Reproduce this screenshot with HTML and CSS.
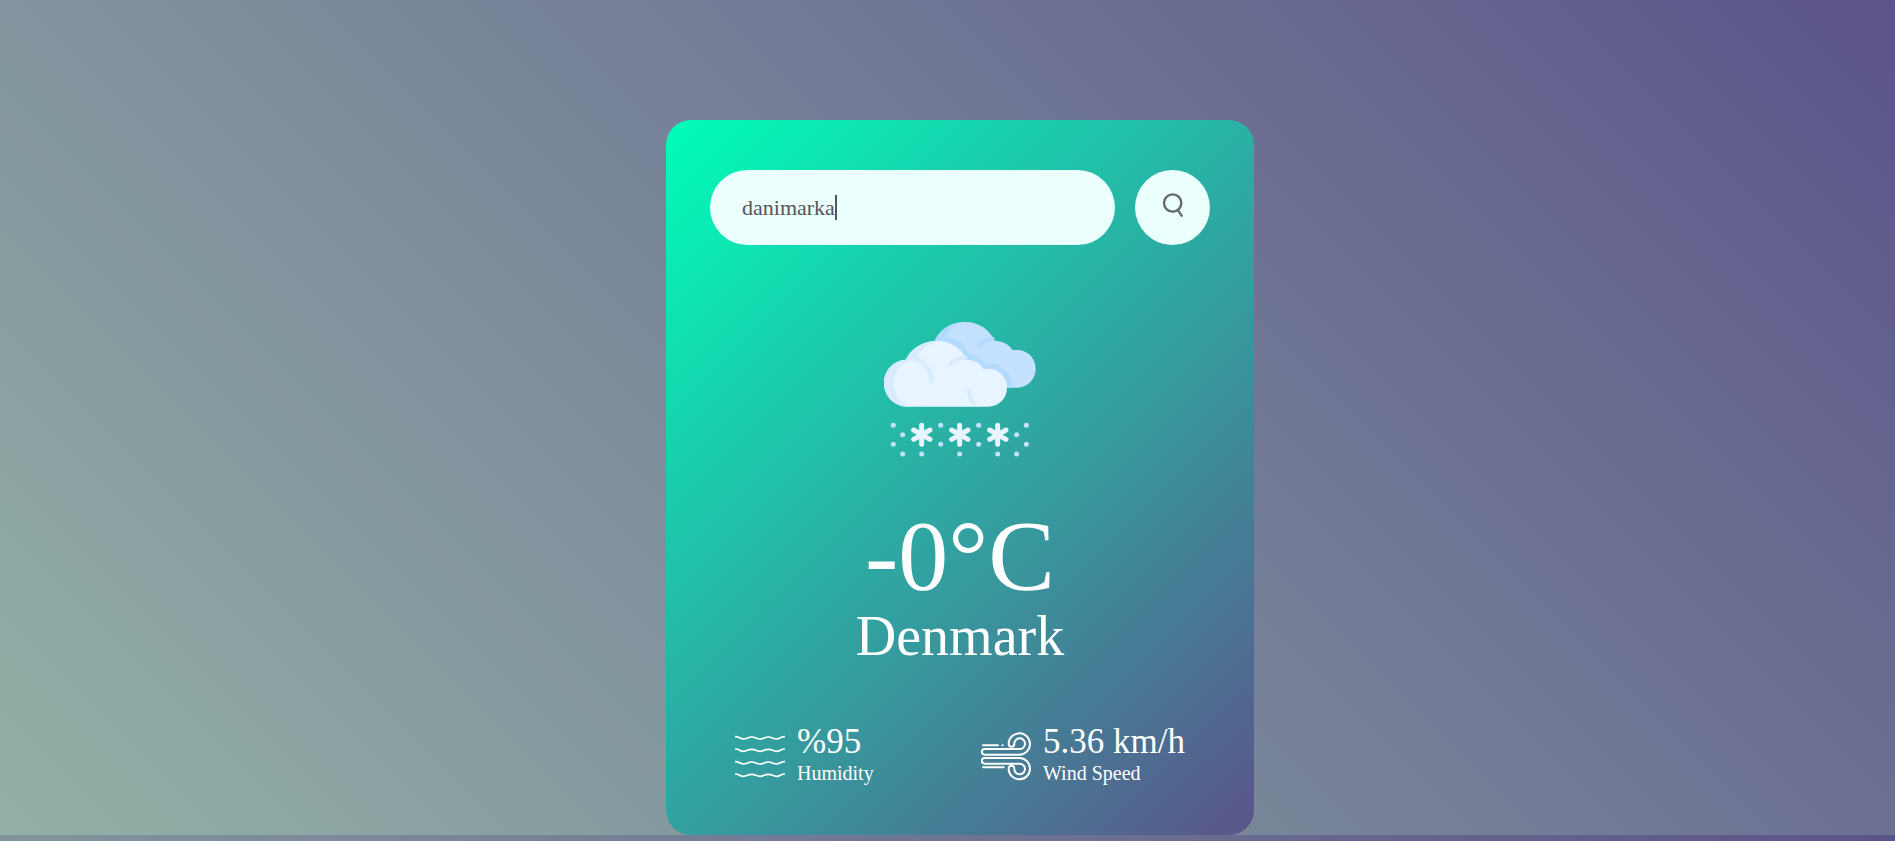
FILE: index.html
```html
<!DOCTYPE html>
<html lang="en">
<head>
<meta charset="utf-8">
<title>Weather</title>
<link rel="stylesheet" href="styles.css">
</head>
<body>
<main class="card">
  <form class="search">
    <div class="field">
      <input class="search-input" type="text" value="danimarka" aria-label="City name" spellcheck="false" autocomplete="off">
      <span class="caret"></span>
    </div>
    <button class="search-button" type="button" aria-label="Search">
      <svg viewBox="225 180 225 225" fill="none" stroke="#636768" stroke-width="7">
        <circle cx="338" cy="279" r="26"/>
        <path d="M354 301L365 317" stroke-linecap="round"/>
      </svg>
    </button>
  </form>

  <section class="weather">
    <svg class="weather-icon" viewBox="0 0 540 480" role="img" aria-label="Snow">
      <path fill="#c4e1ff" d="M192 100C204 60 242 36 285 36C326 36 358 58 374 92C398 92 418 104 429 121C436 119 444 120 450 121C478 125 497 149 497 177C497 208 472 233 441 233H400L300 170Z"/>
      <path fill="#b3daff" d="M192 100C203 63 240 36 285 36C258 42 235 58 228 80C260 84 285 103 297 130C316 136 333 146 345 160C390 156 429 190 429 233H400L200 150Z"/>
      <path fill="none" stroke="#b3daff" stroke-width="12" stroke-linecap="round" d="M326 106C336 93 351 87 368 86"/>
      <path fill="#e8f4ff" d="M113 290C72 290 42 258 42 219C42 181 71 151 107 149C123 115 160 92 200 92C240 92 274 114 291 149C312 149 331 160 341 178C347 176 354 176 360 177C390 179 411 204 411 233C411 265 386 290 354 290Z"/>
      <path fill="#d8ebff" d="M113 290C72 290 42 258 42 219C42 181 71 151 107 149C123 115 160 92 211 93C181 99 153 116 142 139C170 150 191 180 191 212C191 222 178 222 178 212C178 178 154 154 127 151C94 157 71 185 71 219C71 253 90 281 123 290Z"/>
      <path fill="none" stroke="#d8ebff" stroke-width="12" stroke-linecap="round" d="M241 163C252 150 268 143 286 143"/>
      <path fill="#d8ebff" d="M291 240C291 231 304 231 304 240C304 260 312 280 326 290H312C299 277 291 260 291 240Z"/>
      <g fill="none" stroke="#e8f4ff" stroke-width="15" stroke-linecap="round">
        <path d="M155 346v57M131 360l49 28M180 360l-49 28"/>
        <path d="M269 346v57M245 360l49 28M294 360l-49 28"/>
        <path d="M383 346v57M359 360l49 28M408 360l-49 28"/>
      </g>
      <g fill="#c4e1ff">
        <circle cx="70" cy="346" r="7.5"/><circle cx="70" cy="403" r="7.5"/>
        <circle cx="98" cy="374" r="7.5"/><circle cx="98" cy="432" r="7.5"/>
        <circle cx="155" cy="432" r="7.5"/><circle cx="212" cy="346" r="7.5"/>
        <circle cx="212" cy="403" r="7.5"/><circle cx="269" cy="432" r="7.5"/>
        <circle cx="326" cy="346" r="7.5"/><circle cx="326" cy="403" r="7.5"/>
        <circle cx="383" cy="432" r="7.5"/><circle cx="440" cy="374" r="7.5"/>
        <circle cx="440" cy="432" r="7.5"/><circle cx="469" cy="346" r="7.5"/>
        <circle cx="469" cy="403" r="7.5"/>
      </g>
    </svg>
    <h1 class="temp">-0°C</h1>
    <h2 class="city">Denmark</h2>
  </section>

  <section class="details">
    <div class="detail">
      <svg class="detail-icon" viewBox="45 18 150 192" fill="none" stroke="#fff" stroke-width="5" aria-hidden="true">
        <path d="M45 65C58 64 59 72 70 72S84 66 95 66S109 72 120 72S134 66 145 66S159 72 170 72S182 64 195 65"/>
        <path d="M45 102C58 101 59 109 70 109S84 103 95 103S109 109 120 109S134 103 145 103S159 109 170 109S182 101 195 102"/>
        <path d="M45 140C58 139 59 147 70 147S84 141 95 141S109 147 120 147S134 141 145 141S159 147 170 147S182 139 195 140"/>
        <path d="M45 177C58 176 59 184 70 184S84 178 95 178S109 184 120 184S134 178 145 178S159 184 170 184S182 176 195 177"/>
      </svg>
      <div>
        <p class="value">%95</p>
        <p class="label">Humidity</p>
      </div>
    </div>
    <div class="detail">
      <svg class="detail-icon" viewBox="33 18 150 192" fill="none" stroke="#fff" stroke-width="6" stroke-linecap="round" aria-hidden="true">
        <path d="M148 102H44a8.500 8.500 0 0 0 0 17H148a32 32 0 1 0-32-34v2a8.500 8.500 0 0 0 17 0v-2a16 16 0 1 1 15 17"/>
        <path d="M148 146H44a8.500 8.500 0 0 1 0-17H148a32 32 0 1 1-32 34v-2a8.500 8.500 0 0 1 17 0v2a16 16 0 1 0 15-17"/>
        <path d="M39 91H84M97 91h1M39 157H101"/>
      </svg>
      <div>
        <p class="value">5.36 km/h</p>
        <p class="label">Wind Speed</p>
      </div>
    </div>
  </section>
</main>
</body>
</html>
```
FILE: styles.css
```css
* {
  box-sizing: border-box;
  margin: 0;
  padding: 0;
}

body {
  padding: 120px 0 0 25px;
  font-family: "Liberation Serif", "Times New Roman", serif;
  background: linear-gradient(45deg, #93b1a6, #5b548a);
}

.card {
  width: 90%;
  max-width: 588px;
  margin: 0 auto;
  padding: 50px 44px;
  border-radius: 25px;
  color: #fff;
  text-align: center;
  background: linear-gradient(135deg, #00feba, #5b548a);
}

.search {
  display: flex;
  gap: 20px;
}

.field {
  position: relative;
  flex: 1;
}

.search-input {
  width: 100%;
  height: 75px;
  padding: 12px 32px;
  border: 0;
  border-radius: 38px;
  outline: 0;
  font: 22px "Liberation Serif", "Times New Roman", serif;
  color: #555;
  background: #ebfffc;
}

.caret {
  position: absolute;
  top: 25px;
  left: 125px;
  width: 2px;
  height: 25px;
  background: #555;
}

.search-button {
  width: 75px;
  height: 75px;
  border: 0;
  border-radius: 50%;
  background: #ebfffc;
  cursor: pointer;
}

.search-button svg {
  display: block;
  width: 100%;
  height: 100%;
}

.weather-icon {
  display: block;
  width: 180px;
  height: 160px;
  margin: 65px auto 36px;
}

.temp {
  font-size: 100px;
  font-weight: 400;
  line-height: 100px;
}

.city {
  font-size: 56px;
  font-weight: 400;
  line-height: 60px;
}

.details {
  display: flex;
  justify-content: space-between;
  margin-top: 55px;
  padding: 0 25px;
  text-align: left;
}

.detail {
  display: flex;
  align-items: center;
  gap: 12px;
}

.detail-icon {
  width: 50px;
  height: 64px;
}

.value {
  font-size: 35px;
  line-height: 41px;
}

.label {
  font-size: 20px;
  line-height: 23px;
}
```
